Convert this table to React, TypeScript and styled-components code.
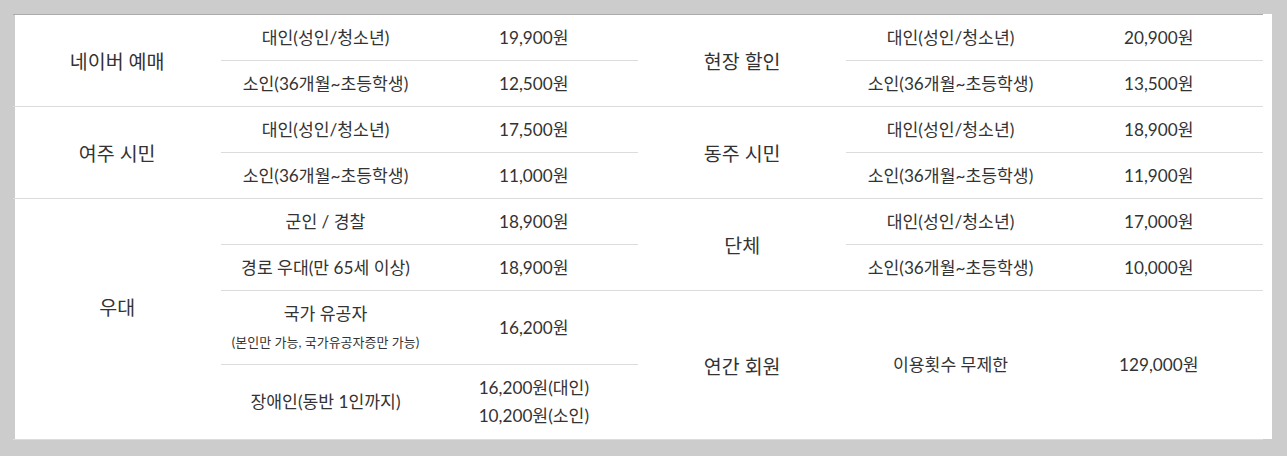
import React from "react";
import styled, { createGlobalStyle } from "styled-components";

const GlobalStyle = createGlobalStyle`
  html, body {
    margin: 0;
    padding: 0;
    background: #cccccc;
  }
  body {
    padding: 15px;
    font-family: "Lato", "Noto Sans CJK KR", sans-serif;
    color: #333333;
  }
`;

const Panel = styled.div`
  width: 1257px;
  height: 425px;
  background: #ffffff;
`;

const Grid = styled.div`
  width: 1250px;
  margin: -1px 0 0 -2px;
  border-top: 1px solid #ababab;
  display: grid;
  grid-template-columns: repeat(6, 1fr);
  grid-template-rows: repeat(6, 46px) 74px 75px;
`;

const Cell = styled.div<{ $rows?: number; $cols?: number; $lift?: number }>`
  box-sizing: border-box;
  grid-row: span ${(p) => p.$rows ?? 1};
  grid-column: span ${(p) => p.$cols ?? 1};
  border-bottom: 1px solid #dcdcdc;
  display: flex;
  flex-direction: column;
  align-items: center;
  justify-content: center;
  text-align: center;
  white-space: nowrap;
  padding-bottom: ${(p) => p.$lift ?? 0}px;
`;

const Label = styled(Cell)`
  font-size: 19.5px;
`;

const Type = styled(Cell)`
  font-size: 17.2px;
  line-height: 28px;
`;

const Price = styled(Cell)`
  font-size: 17.2px;
  line-height: 28px;
`;

const Note = styled.span`
  font-size: 13px;
  line-height: 28px;
`;

export default function App() {
  return (
    <>
      <GlobalStyle />
      <Panel>
        <Grid>
          <Label $rows={2}>네이버 예매</Label>
          <Type>대인(성인/청소년)</Type>
          <Price>19,900원</Price>
          <Label $rows={2}>현장 할인</Label>
          <Type>대인(성인/청소년)</Type>
          <Price>20,900원</Price>

          <Type>소인(36개월~초등학생)</Type>
          <Price>12,500원</Price>
          <Type>소인(36개월~초등학생)</Type>
          <Price>13,500원</Price>

          <Label $rows={2}>여주 시민</Label>
          <Type>대인(성인/청소년)</Type>
          <Price>17,500원</Price>
          <Label $rows={2}>동주 시민</Label>
          <Type>대인(성인/청소년)</Type>
          <Price>18,900원</Price>

          <Type>소인(36개월~초등학생)</Type>
          <Price>11,000원</Price>
          <Type>소인(36개월~초등학생)</Type>
          <Price>11,900원</Price>

          <Label $rows={4} $lift={25}>우대</Label>
          <Type>군인 / 경찰</Type>
          <Price>18,900원</Price>
          <Label $rows={2}>단체</Label>
          <Type>대인(성인/청소년)</Type>
          <Price>17,000원</Price>

          <Type>경로 우대(만 65세 이상)</Type>
          <Price>18,900원</Price>
          <Type>소인(36개월~초등학생)</Type>
          <Price>10,000원</Price>

          <Type>
            <span>국가 유공자</span>
            <Note>(본인만 가능, 국가유공자증만 가능)</Note>
          </Type>
          <Price>16,200원</Price>
          <Label $rows={2}>연간 회원</Label>
          <Type $rows={2}>이용횟수 무제한</Type>
          <Price $rows={2}>129,000원</Price>

          <Type>장애인(동반 1인까지)</Type>
          <Price>
            <span>16,200원(대인)</span>
            <span>10,200원(소인)</span>
          </Price>
        </Grid>
      </Panel>
    </>
  );
}
